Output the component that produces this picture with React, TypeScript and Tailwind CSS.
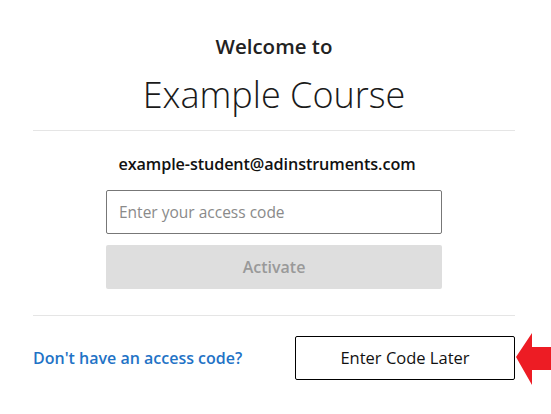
import React from "react";

const App = () => {
  return (
    <div
      className="w-[551px] h-[414px] bg-white relative overflow-hidden"
      style={{ fontFamily: '"Open Sans", sans-serif' }}
    >
      <div className="ml-[33px] w-[482px] flex flex-col items-center">
        <h2 className="mt-[32px] text-[20.5px] leading-[28px] font-semibold text-[#222]">
          Welcome to
        </h2>
        <h1 className="mt-[11px] text-[36px] leading-[48px] font-light text-[#1a1a1a]">
          Example Course
        </h1>
        <div className="mt-[11px] w-full border-t border-[#e5e5e5]" />

        <div className="mt-[22px] mr-[14px] text-[16.2px] leading-[22px] font-semibold text-[#111] tracking-[-0.1px]">
          example-student@adinstruments.com
        </div>

        <input
          type="text"
          placeholder="Enter your access code"
          className="mt-[15px] w-[336px] h-[44px] px-[12px] text-[15.5px] border border-[#777] rounded-[2px] placeholder-[#8a8a8a] outline-none"
        />
        <button
          type="button"
          className="mt-[11px] w-[336px] h-[44px] bg-[#dedede] text-[#999] text-[16px] font-semibold rounded-[2px]"
        >
          Activate
        </button>

        <div className="mt-[26px] w-full border-t border-[#e5e5e5]" />

        <div className="mt-[20px] w-full flex items-center justify-between">
          <a href="#" className="text-[16px] font-semibold text-[#1f73c6]">
            Don't have an access code?
          </a>
          <button
            type="button"
            className="w-[220px] h-[44px] border border-black rounded-[2px] text-[16.5px] font-medium text-[#111]"
          >
            Enter Code Later
          </button>
        </div>
      </div>

      <svg
        className="absolute left-[515px] top-[333px]"
        width="36"
        height="52"
        viewBox="0 0 36 52"
      >
        <polygon points="1,24 17,0 17,14 36,14 36,37 17,37 17,52" fill="#ed1c24" />
      </svg>
    </div>
  );
};

export default App;
